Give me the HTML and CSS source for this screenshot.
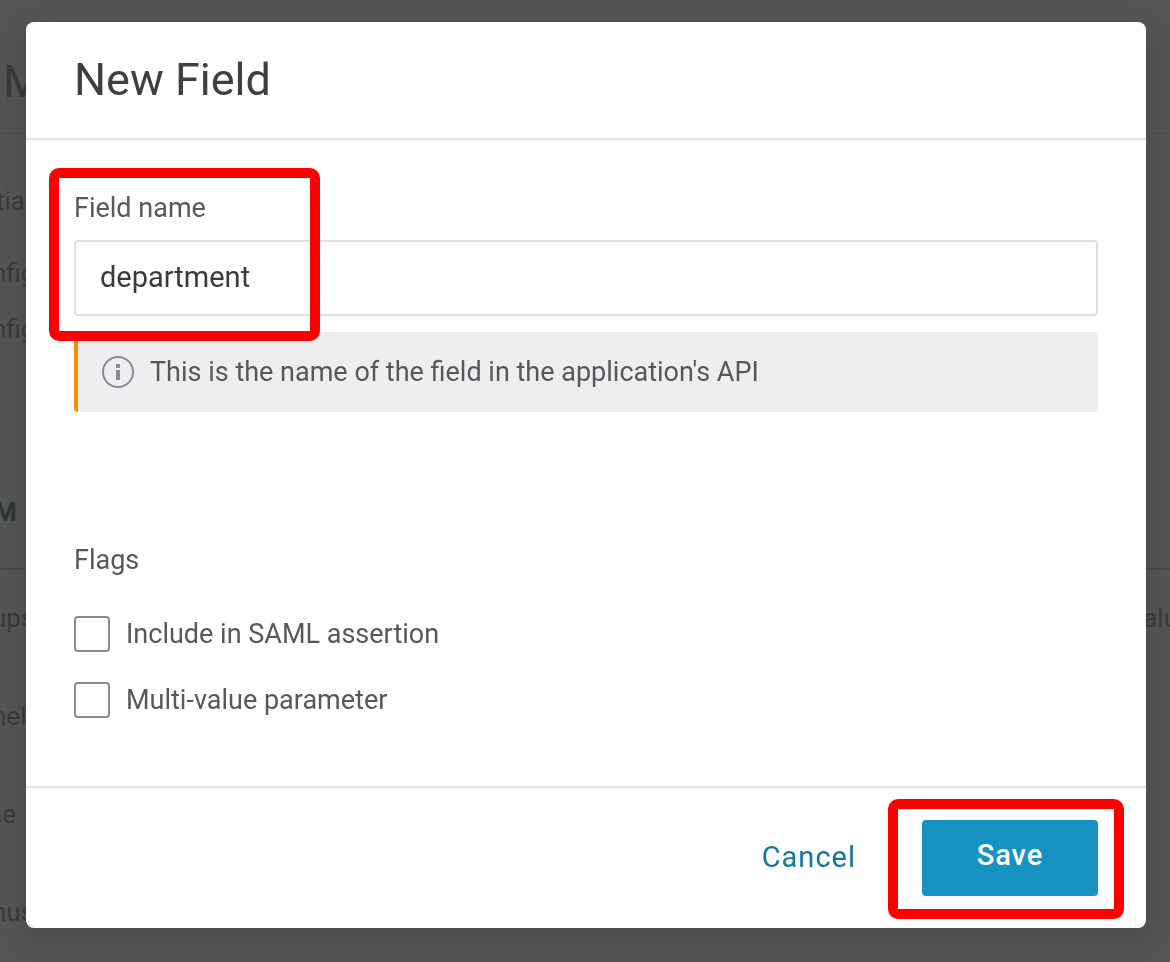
FILE: index.html
```
<!DOCTYPE html>
<html lang="en">
<head>
    <meta charset="UTF-8">
    <meta name="viewport" content="width=device-width, initial-scale=1.0">
    <title>New Field</title>
    <link rel="stylesheet" href="styles.css">
</head>
<body>

<!-- Page behind the dialog -->
<div class="page" aria-hidden="true">
    <div class="page-header">M</div>
    <div class="page-nav">
        <span>tia</span>
        <span>nfig</span>
        <span>nfig</span>
    </div>
    <div class="page-section">M</div>
    <div class="page-row"><span>ups</span><span>alu</span></div>
    <div class="page-row"><span>nel</span></div>
    <div class="page-row short"><span>ne</span></div>
    <div class="page-row"><span>nus</span></div>
</div>

<!-- Dialog -->
<div class="overlay">
    <form class="modal" role="dialog" aria-labelledby="modalTitle">
        <div class="modal-header">
            <h1 id="modalTitle">New Field</h1>
        </div>

        <div class="modal-body">
            <!-- Field name -->
            <div class="field highlight">
                <label for="fieldName">Field name</label>
                <input type="text" id="fieldName" name="fieldName" value="department">
            </div>
            <div class="info">
                <svg class="info-icon" viewBox="0 0 32 32" aria-hidden="true">
                    <circle cx="16" cy="16" r="15" fill="none" stroke="#8b8b8f" stroke-width="2"/>
                    <rect x="14" y="8" width="4" height="4" fill="#8b8b8f"/>
                    <rect x="14" y="14" width="4" height="10" fill="#8b8b8f"/>
                </svg>
                <span>This is the name of the field in the application's API</span>
            </div>

            <!-- Flags -->
            <fieldset class="flags">
                <legend>Flags</legend>
                <div class="check">
                    <input type="checkbox" id="saml" name="saml">
                    <label for="saml">Include in SAML assertion</label>
                </div>
                <div class="check">
                    <input type="checkbox" id="multi" name="multi">
                    <label for="multi">Multi-value parameter</label>
                </div>
            </fieldset>
        </div>

        <!-- Buttons -->
        <div class="modal-footer">
            <button type="button" class="secondary">Cancel</button>
            <div class="save highlight">
                <button type="submit" class="primary">Save</button>
            </div>
        </div>
    </form>
</div>

</body>
</html>
```
FILE: styles.css
```
*, *::after {
    box-sizing: border-box;
}
body {
    font-family: Roboto, "Liberation Sans", sans-serif;
    font-size: 27px;
    line-height: 32px;
    margin: 0;
    overflow: hidden;
    color: #58585b;
    background-color: #555556;
}

/* Dimmed page */
.page {
    font-size: 26px;
    color: #3b3b3c;
}
.page-header {
    height: 134px;
    padding: 54px 3px 0;
    font-size: 45px;
    line-height: 56px;
    border-bottom: 2px solid #515151;
}
.page-nav {
    display: flex;
    flex-direction: column;
    gap: 24px;
    margin-left: -8px;
    padding-top: 51px;
}
.page-nav span:first-child {
    margin-bottom: 16px;
    padding-left: 4px;
}
.page-section {
    margin-top: 151px;
    padding-bottom: 40px;
    text-indent: -6px;
    font-weight: bold;
    color: #2f3738;
    border-bottom: 2px solid #49494a;
}
.page-row {
    display: flex;
    justify-content: space-between;
    align-items: center;
    height: 98px;
    margin: 0 -8px;
    padding-bottom: 2px;
}
.page-row.short {
    margin-left: -12px;
}

/* Dialog */
.overlay {
    position: fixed;
    inset: 0;
    padding: 22px 24px 34px 26px;
}
.modal {
    background: white;
    border-radius: 8px;
    box-shadow: 0 8px 32px rgba(0, 0, 0, 0.15);
}
.modal-header {
    padding: 30px 48px;
    border-bottom: 2px solid #e3e3e5;
}
h1 {
    margin: 0;
    font-size: 45px;
    line-height: 56px;
    font-weight: normal;
    color: #3f3f40;
}
.modal-body {
    padding: 52px 48px 68px;
}
.field label {
    display: block;
    margin-bottom: 16px;
}
input[type="text"] {
    display: block;
    width: 100%;
    height: 76px;
    padding: 0 24px 2px;
    border: 2px solid #dfdfe1;
    border-radius: 4px;
    font-family: inherit;
    font-size: 29px;
    color: #3a3a3c;
    background: white;
}
.info {
    display: flex;
    gap: 16px;
    height: 80px;
    margin-top: 16px;
    padding: 24px;
    border-left: 4px solid #ff8a00;
    border-radius: 4px;
    background-color: #eeeef1;
}
.info-icon {
    width: 32px;
    height: 32px;
}
.flags {
    margin: 132px 0 0;
    padding: 0;
    border: none;
}
legend {
    padding: 0;
    margin-bottom: 40px;
}
.check {
    display: flex;
    align-items: center;
    gap: 16px;
}
.check + .check {
    margin-top: 30px;
}
input[type="checkbox"] {
    appearance: none;
    width: 36px;
    height: 36px;
    margin: 0;
    border: 2px solid #8b8b8d;
    border-radius: 4px;
    background: white;
}
input[type="checkbox"]:checked {
    background: #1793c3;
}
.modal-footer {
    display: flex;
    justify-content: flex-end;
    align-items: center;
    gap: 40px;
    padding: 32px 48px;
    border-top: 2px solid #e3e3e5;
}
button {
    height: 76px;
    border: none;
    border-radius: 4px;
    font-family: inherit;
    font-size: 29px;
    letter-spacing: 1px;
    cursor: pointer;
}
.primary {
    display: block;
    width: 176px;
    padding: 0 0 6px;
    background-color: #1793c3;
    color: white;
    font-weight: 500;
}
.secondary {
    padding: 0 26px 2px;
    background: none;
    color: #13769b;
}

/* Red callout frames */
.highlight {
    position: relative;
}
.highlight::after {
    content: "";
    position: absolute;
    border: 10px solid #ff0000;
    border-radius: 10px;
    pointer-events: none;
}
.field::after {
    top: -24px;
    left: -25px;
    bottom: -25px;
    width: 271px;
}
.save::after {
    inset: -21px -26px -23px -34px;
}
```
